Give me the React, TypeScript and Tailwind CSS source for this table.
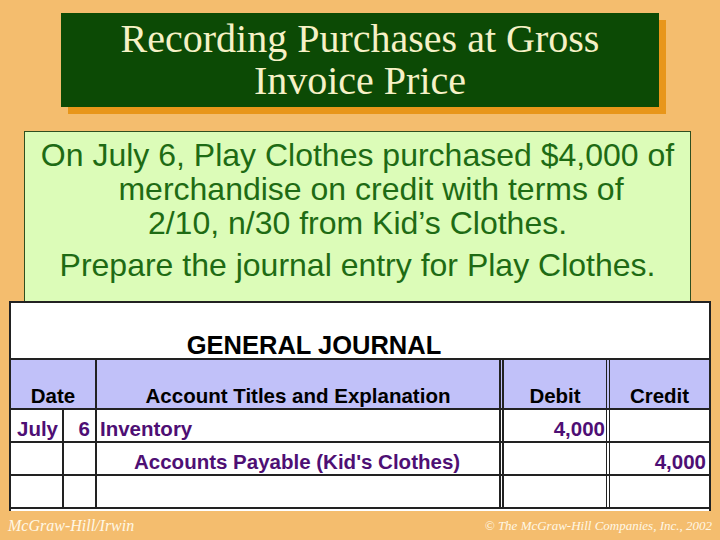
export default function App() {
  const rows = [
    { m: 'July', d: '6', acct: 'Inventory', indent: false, dr: '4,000', cr: '' },
    { m: '', d: '', acct: "Accounts Payable (Kid's Clothes)", indent: true, dr: '', cr: '4,000' },
    { m: '', d: '', acct: '', indent: false, dr: '', cr: '' },
  ];
  return (
    <div className="w-[720px] h-[540px] bg-[#f4bd6e] flex flex-col overflow-hidden font-['Liberation_Sans',Arial,sans-serif]">
      {/* title */}
      <div className="pt-[13px] pl-[61px] h-[131px]">
        <div className="w-[598px] h-[94px] bg-[#0c4a05] shadow-[7px_7px_0_#e8961a] flex flex-col items-center justify-center font-['Liberation_Serif',serif] text-[40px] leading-[42px] text-[#f6f1c6]">
          <div>Recording Purchases at Gross</div>
          <div>Invoice Price</div>
        </div>
      </div>

      {/* problem box */}
      <div className="ml-[24px] w-[667px] h-[171px] bg-[#dcfcb8] border border-[#2f4f1f] text-[#1e6b14] text-[32px] leading-[34px] flex flex-col items-center pt-[6px]">
        <div>On July 6, Play Clothes purchased $4,000 of</div>
        <div className="pl-[27px]">merchandise on credit with terms of</div>
        <div>2/10, n/30 from Kid’s Clothes.</div>
        <div className="mt-[8px]">Prepare the journal entry for Play Clothes.</div>
      </div>

      {/* journal */}
      <div className="-mt-px ml-[9px] w-[702px] h-[210px] bg-white border-2 border-[#222] border-b-0 flex flex-col font-bold text-[20.5px] leading-none">
        <div className="h-[55px] flex items-end justify-center pr-[92px] text-[25.5px] text-black">GENERAL JOURNAL</div>
        <div className="h-[52px] flex bg-[#c1c1f9] border-t-2 border-b-2 border-[#222] text-black">
          <div className="w-[86px] border-r-2 border-[#222] flex items-end justify-center pb-[2px]">Date</div>
          <div className="w-[407px] border-r-[5px] border-double border-[#222] flex items-end justify-center pb-[2px]">Account Titles and Explanation</div>
          <div className="w-[106px] border-r-[4px] border-double border-[#222] flex items-end justify-center pb-[2px]">Debit</div>
          <div className="flex-1 flex items-end justify-center pb-[2px]">Credit</div>
        </div>
        {rows.map((r, i) => (
          <div key={i} className="h-[33px] flex border-b-2 border-[#222] text-[#4e0f74]">
            <div className="w-[53px] border-r-2 border-[#222] flex items-end pb-[2px] pl-[6px]">{r.m}</div>
            <div className="w-[33px] border-r-2 border-[#222] flex items-end pb-[2px] justify-end pr-[5px]">{r.d}</div>
            <div className={`w-[407px] border-r-[5px] border-double border-[#222] flex items-end pb-[2px] ${r.indent ? 'pl-[37px]' : 'pl-[3px]'}`}>{r.acct}</div>
            <div className="w-[106px] border-r-[4px] border-double border-[#222] flex items-end pb-[2px] justify-end pr-[1px]">{r.dr}</div>
            <div className="flex-1 flex items-end pb-[2px] justify-end pr-[3px]">{r.cr}</div>
          </div>
        ))}
      </div>

      {/* footer */}
      <div className="flex-1 flex items-center justify-between px-[8px] font-['Liberation_Serif',serif] italic text-[#fff8e6]">
        <span className="text-[16px]">McGraw-Hill/Irwin</span>
        <span className="text-[13px]">© The McGraw-Hill Companies, Inc., 2002</span>
      </div>
    </div>
  );
}
